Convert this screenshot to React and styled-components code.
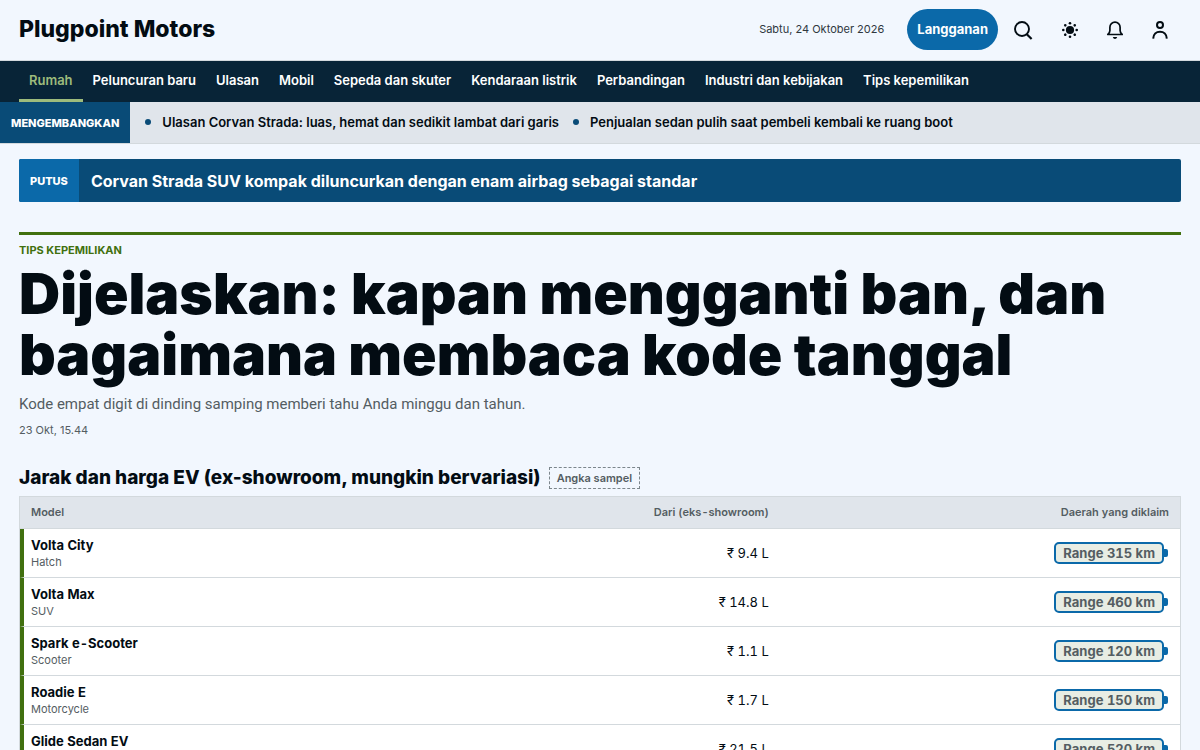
import React from "react";
import styled, { createGlobalStyle } from "styled-components";

const c = {
  page: "#f2f7fe",
  ink: "#030c13",
  muted: "#545d62",
  navy: "#082437",
  blueDark: "#094b77",
  blue: "#0b69a9",
  green: "#41700f",
  lime: "#9dbb7c",
  panel: "#e0e5eb",
  line: "#d3d9dd",
};

const Global = createGlobalStyle`
  *, *::before, *::after { box-sizing: border-box; }
  body {
    margin: 0;
    background: ${c.page};
    color: ${c.ink};
    font-family: Inter, "Liberation Sans", sans-serif;
    font-size: 13px;
    line-height: 20px;
  }
  a { color: inherit; text-decoration: none; }
  h1, h2, p, ul { margin: 0; padding: 0; }
  ul { list-style: none; }
`;

const TopBar = styled.header`
  display: flex;
  align-items: center;
  justify-content: space-between;
  height: 61px;
  padding: 0 20px 2px 19px;
  border-bottom: 1px solid ${c.line};
`;

const Brand = styled.a`
  font-size: 23px;
  line-height: 28px;
  font-weight: 800;
`;

const Tools = styled.div`
  display: flex;
  align-items: center;
  gap: 6px;
`;

const Today = styled.time`
  margin-right: 17px;
  font-size: 11px;
  color: #2f383e;
`;

const Subscribe = styled.button`
  height: 41px;
  padding: 0 10px 1px;
  border: 0;
  border-radius: 21px;
  background: ${c.blue};
  color: #fff;
  font: 700 13px/20px Inter, sans-serif;
  cursor: pointer;
`;

const IconGroup = styled.div`
  display: flex;
  gap: 5px;
`;

const IconButton = styled.button`
  display: grid;
  place-items: center;
  width: 40px;
  height: 40px;
  padding: 2px 0 0;
  border: 0;
  background: none;
  color: ${c.ink};
  cursor: pointer;
`;

const Nav = styled.nav`
  display: flex;
  height: 41px;
  padding: 0 19px;
  background: ${c.navy};
`;

const NavLink = styled.a`
  padding: 9px 10px 0;
  border-bottom: 3px solid ${(p) => (p.$active ? c.lime : "transparent")};
  color: ${(p) => (p.$active ? c.lime : "#fff")};
  font-weight: 600;
  white-space: nowrap;
`;

const Ticker = styled.section`
  display: flex;
  height: 42px;
  border-bottom: 1px solid ${c.line};
  background: ${c.panel};
  overflow: hidden;
`;

const TickerLabel = styled.strong`
  display: flex;
  align-items: center;
  padding: 0 11px;
  background: ${c.blueDark};
  color: #fff;
  font-size: 11px;
  font-weight: 800;
  text-transform: uppercase;
`;

const TickerList = styled.ul`
  display: flex;
  align-items: center;
  gap: 14px;
  padding: 0 0 1px 15px;
`;

const TickerItem = styled.li`
  display: flex;
  align-items: center;
  gap: 11px;
  font-weight: 600;
  white-space: nowrap;

  &::before {
    content: "";
    width: 6px;
    height: 6px;
    border-radius: 50%;
    background: ${c.blueDark};
  }
`;

const Main = styled.main`
  padding: 15px 19px 0;
`;

const Breaking = styled.a`
  display: flex;
  height: 43px;
  border-radius: 2px;
  overflow: hidden;
  background: ${c.blueDark};
  color: #fff;
`;

const BreakingTag = styled.span`
  display: flex;
  align-items: center;
  padding: 0 11px;
  background: ${c.blue};
  font-size: 11px;
  font-weight: 800;
  text-transform: uppercase;
`;

const BreakingTitle = styled.span`
  display: flex;
  align-items: center;
  padding: 0 12px;
  font-size: 16px;
  font-weight: 700;
`;

const Lead = styled.article`
  margin-top: 30px;
  padding-top: 7px;
  border-top: 3px solid ${c.green};
`;

const Eyebrow = styled.p`
  font-size: 11px;
  line-height: 16px;
  font-weight: 700;
  text-transform: uppercase;
  color: ${c.green};
`;

const Headline = styled.h1`
  margin-top: 5px;
  font-size: 57px;
  line-height: 61px;
  font-weight: 900;
`;

const Deck = styled.p`
  margin-top: 7px;
  font-family: Roboto, "Liberation Sans", sans-serif;
  font-size: 15px;
  line-height: 24px;
  color: ${c.muted};
`;

const Stamp = styled.time`
  display: block;
  margin-top: 6px;
  font-size: 11px;
  line-height: 16px;
  color: ${c.muted};
`;

const SectionHead = styled.div`
  display: flex;
  align-items: center;
  gap: 8px;
  margin: 28px 0 6px;
`;

const SectionTitle = styled.h2`
  font-size: 19px;
  line-height: 24px;
  font-weight: 800;
`;

const SampleTag = styled.span`
  padding: 2px 7px;
  border: 1px dashed #7c868c;
  font-size: 11px;
  line-height: 16px;
  font-weight: 600;
  color: ${c.muted};
`;

const Table = styled.table`
  width: 100%;
  border: 1px solid ${c.line};
  border-spacing: 0;
  background: #fff;
  font-variant-numeric: tabular-nums;
`;

const HeadCell = styled.th`
  width: ${(p) => p.$width};
  height: 32px;
  padding: 0 11px 2px;
  border-bottom: 1px solid ${c.line};
  background: ${c.panel};
  color: ${c.muted};
  font-size: 11px;
  line-height: 16px;
  font-weight: 600;
  text-align: ${(p) => (p.$end ? "right" : "left")};
`;

const Cell = styled.td`
  height: 49px;
  padding: 0 11px;
  border-bottom: 1px solid ${c.line};
  text-align: right;
`;

const ModelCell = styled.th`
  height: 49px;
  padding: 0 7px;
  border-left: 4px solid ${c.green};
  border-bottom: 1px solid ${c.line};
  text-align: left;
  font-weight: 700;
  line-height: 17px;
`;

const Kind = styled.span`
  display: block;
  font-size: 11px;
  line-height: 16px;
  font-weight: 400;
  color: ${c.muted};
`;

const Battery = styled.span`
  position: relative;
  display: inline-block;
  margin-right: 5px;
  padding: 0 7px;
  border: 2px solid ${c.blue};
  border-radius: 5px;
  background: #e8ede4;
  color: ${c.muted};
  font-weight: 700;
  line-height: 18px;

  &::after {
    content: "";
    position: absolute;
    top: 5px;
    right: -6px;
    width: 4px;
    height: 8px;
    border-radius: 0 2px 2px 0;
    background: ${c.blue};
  }
`;

const SearchIcon = () => (
  <svg width="20" height="20" viewBox="0 0 20 20" fill="none" stroke="currentColor" strokeWidth="1.9">
    <circle cx="8" cy="9" r="7" />
    <path d="M12.800 14.200l4.800 4.800" strokeWidth="2.200" />
  </svg>
);

const SunIcon = () => (
  <svg width="18" height="18" viewBox="0 0 18 18" fill="currentColor">
    <circle cx="9" cy="9" r="4.100" />
    {[0, 45, 90, 135, 180, 225, 270, 315].map((a) => (
      <circle key={a} cx="9" cy="2.300" r="1.300" transform={`rotate(${a} 9 9)`} />
    ))}
  </svg>
);

const BellIcon = () => (
  <svg width="18" height="20" viewBox="0 0 18 20" fill="none" stroke="currentColor" strokeWidth="1.700">
    <path d="M1.800 14.500h14.400c-1.300-1-2.100-2.200-2.100-4V7.300a5.100 5.100 0 0 0-10.200 0v3.200c0 1.800-.8 3-2.100 4z" strokeLinejoin="round" />
    <path d="M6.800 17h4.400c-.4 1.200-1.200 1.900-2.200 1.900s-1.800-.7-2.200-1.900z" fill="currentColor" stroke="none" />
  </svg>
);

const UserIcon = () => (
  <svg width="18" height="20" viewBox="0 0 18 20" fill="none" stroke="currentColor" strokeWidth="2">
    <circle cx="9" cy="5" r="3" />
    <path d="M2.200 18.600c.2-4.300 3-6.900 6.800-6.900s6.600 2.600 6.800 6.900" />
  </svg>
);

const sections = [
  "Rumah",
  "Peluncuran baru",
  "Ulasan",
  "Mobil",
  "Sepeda dan skuter",
  "Kendaraan listrik",
  "Perbandingan",
  "Industri dan kebijakan",
  "Tips kepemilikan",
];

const trending = [
  "Ulasan Corvan Strada: luas, hemat dan sedikit lambat dari garis",
  "Penjualan sedan pulih saat pembeli kembali ke ruang boot",
];

const models = [
  { name: "Volta City", kind: "Hatch", price: "₹ 9.4 L", range: 315 },
  { name: "Volta Max", kind: "SUV", price: "₹ 14.8 L", range: 460 },
  { name: "Spark e-Scooter", kind: "Scooter", price: "₹ 1.1 L", range: 120 },
  { name: "Roadie E", kind: "Motorcycle", price: "₹ 1.7 L", range: 150 },
  { name: "Glide Sedan EV", kind: "Sedan", price: "₹ 21.5 L", range: 520 },
];

export default function App() {
  return (
    <>
      <Global />
      <TopBar>
        <Brand href="#">Plugpoint Motors</Brand>
        <Tools>
          <Today dateTime="2026-10-24">Sabtu, 24 Oktober 2026</Today>
          <Subscribe type="button">Langganan</Subscribe>
          <IconButton type="button" aria-label="Cari"><SearchIcon /></IconButton>
          <IconGroup>
            <IconButton type="button" aria-label="Tema"><SunIcon /></IconButton>
            <IconButton type="button" aria-label="Notifikasi"><BellIcon /></IconButton>
            <IconButton type="button" aria-label="Akun"><UserIcon /></IconButton>
          </IconGroup>
        </Tools>
      </TopBar>
      <Nav>
        {sections.map((s, i) => (
          <NavLink key={s} href="#" $active={i === 0}>{s}</NavLink>
        ))}
      </Nav>
      <Ticker>
        <TickerLabel>Mengembangkan</TickerLabel>
        <TickerList>
          {trending.map((t) => (
            <TickerItem key={t}><a href="#">{t}</a></TickerItem>
          ))}
        </TickerList>
      </Ticker>
      <Main>
        <Breaking href="#">
          <BreakingTag>Putus</BreakingTag>
          <BreakingTitle>Corvan Strada SUV kompak diluncurkan dengan enam airbag sebagai standar</BreakingTitle>
        </Breaking>
        <Lead>
          <Eyebrow>Tips kepemilikan</Eyebrow>
          <Headline>Dijelaskan: kapan mengganti ban, dan bagaimana membaca kode tanggal</Headline>
          <Deck>Kode empat digit di dinding samping memberi tahu Anda minggu dan tahun.</Deck>
          <Stamp>23 Okt, 15.44</Stamp>
        </Lead>
        <section>
          <SectionHead>
            <SectionTitle>Jarak dan harga EV (ex-showroom, mungkin bervariasi)</SectionTitle>
            <SampleTag>Angka sampel</SampleTag>
          </SectionHead>
          <Table>
            <thead>
              <tr>
                <HeadCell scope="col" $width="40%">Model</HeadCell>
                <HeadCell scope="col" $width="25.5%" $end>Dari (eks-showroom)</HeadCell>
                <HeadCell scope="col" $end>Daerah yang diklaim</HeadCell>
              </tr>
            </thead>
            <tbody>
              {models.map((m) => (
                <tr key={m.name}>
                  <ModelCell scope="row">
                    {m.name}
                    <Kind>{m.kind}</Kind>
                  </ModelCell>
                  <Cell>{m.price}</Cell>
                  <Cell><Battery>Range {m.range} km</Battery></Cell>
                </tr>
              ))}
            </tbody>
          </Table>
        </section>
      </Main>
    </>
  );
}
